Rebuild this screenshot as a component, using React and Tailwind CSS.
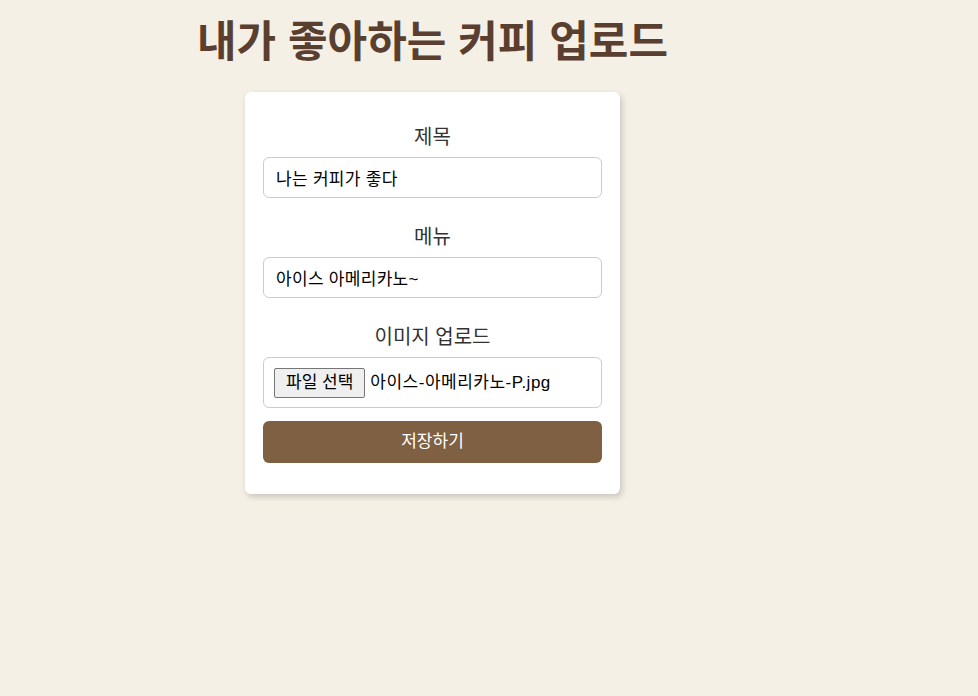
export default function App() {
  return (
    <div className="min-h-screen w-full bg-[#f5f0e6] font-['Liberation_Sans','Noto_Sans_CJK_KR',sans-serif]">
      <div className="w-[865px] flex flex-col items-center">
        <h1 className="mt-[18px] text-[43px] leading-[48px] font-bold text-[#5a3f30]">
          내가 좋아하는 커피 업로드
        </h1>

        <form
          className="mt-[26px] w-[375px] bg-white rounded-md px-[18px] pt-[33px] pb-[31px] shadow-[2px_3px_6px_rgba(0,0,0,0.18)]"
          onSubmit={(e) => e.preventDefault()}
        >
          <label className="block text-center text-[20px] leading-6 text-[#333] mb-2">
            제목
          </label>
          <input
            type="text"
            defaultValue="나는 커피가 좋다"
            className="block w-full h-[41px] px-3 border border-[#ccc] rounded-md text-[17px] tracking-[0.3px] text-black outline-none"
          />

          <label className="block text-center text-[20px] leading-6 text-[#333] mt-[27px] mb-2">
            메뉴
          </label>
          <input
            type="text"
            defaultValue="아이스 아메리카노~"
            className="block w-full h-[41px] px-3 border border-[#ccc] rounded-md text-[17px] tracking-[0.3px] text-black outline-none"
          />

          <label className="block text-center text-[20px] leading-6 text-[#333] mt-[27px] mb-2">
            이미지 업로드
          </label>
          <div className="flex items-center gap-[5px] w-full h-[51px] pl-[10px] border border-[#ccc] rounded-md">
            <span className="h-[30px] px-[11px] flex items-center bg-[#efefef] border border-[#767676] rounded-[2px] text-[17px] text-black whitespace-nowrap">
              파일 선택
            </span>
            <span className="text-[17px] tracking-[0.5px] text-black">
              아이스-아메리카노-P.jpg
            </span>
          </div>

          <button
            type="submit"
            className="mt-[13px] w-full h-[42px] rounded-md bg-[#7f6043] text-white text-[17px]"
          >
            저장하기
          </button>
        </form>
      </div>
    </div>
  );
}
